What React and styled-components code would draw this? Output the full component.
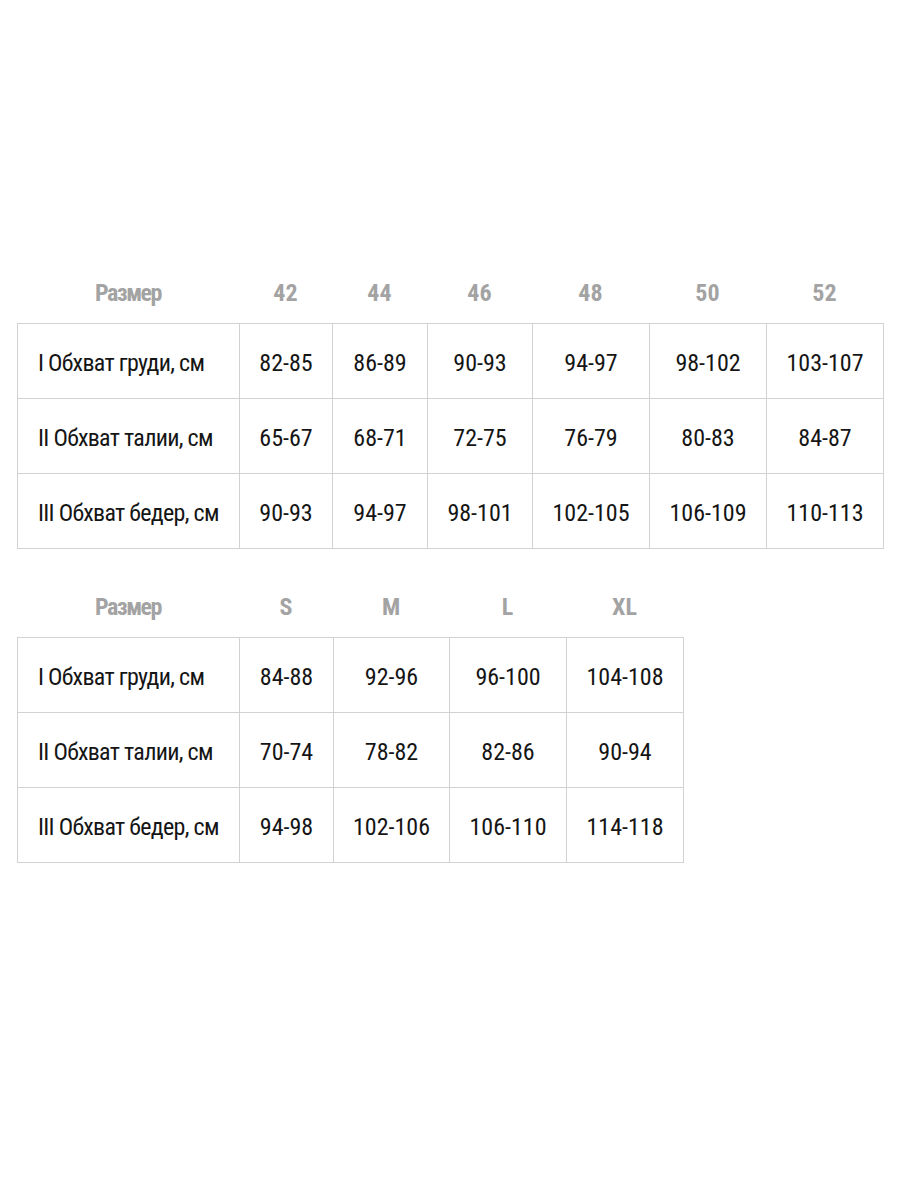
import React from 'react'
import styled, { createGlobalStyle } from 'styled-components'

const GlobalStyle = createGlobalStyle`
body {
    margin: 0;
    background: #fff;
    font-family: "Liberation Sans Narrow", "Roboto Condensed", "Liberation Sans", sans-serif;
}
`

const Page = styled.div`
padding: 270px 0 0 17px;
display: flex;
flex-direction: column;
gap: 35px;
`

const Block = styled.div`
display: flex;
flex-direction: column;
`

const HeadRow = styled.div`
display: grid;
grid-template-columns: ${p => p.cols};
height: 53px;
`

const HeadCell = styled.div`
display: flex;
align-items: center;
justify-content: center;
padding-bottom: 8px;
color: #a3a3a3;
font-weight: bold;
font-size: 24px;
letter-spacing: ${p => p.label ? '-1.5px' : '0'};
`

const Grid = styled.div`
display: grid;
grid-template-columns: ${p => p.cols};
width: max-content;
border-top: 1px solid #d2d2d2;
border-left: 1px solid #d2d2d2;
`

const Cell = styled.div`
height: 74px;
box-sizing: border-box;
height: 75px;
padding-top: 3px;
display: flex;
align-items: center;
justify-content: ${p => p.label ? 'flex-start' : 'center'};
padding-left: ${p => p.label ? '20px' : '0'};
letter-spacing: ${p => p.label ? '-0.7px' : '0'};
border-right: 1px solid #d2d2d2;
border-bottom: 1px solid #d2d2d2;
color: #151515;
font-size: 24px;
`

const labels = ['I Обхват груди, см', 'II Обхват талии, см', 'III Обхват бедер, см']

const tables = [
    {
        cols: '222px 93px 95px 105px 117px 117px 117px',
        head: ['42', '44', '46', '48', '50', '52'],
        rows: [
            ['82-85', '86-89', '90-93', '94-97', '98-102', '103-107'],
            ['65-67', '68-71', '72-75', '76-79', '80-83', '84-87'],
            ['90-93', '94-97', '98-101', '102-105', '106-109', '110-113'],
        ],
    },
    {
        cols: '222px 94px 116px 117px 117px',
        head: ['S', 'M', 'L', 'XL'],
        rows: [
            ['84-88', '92-96', '96-100', '104-108'],
            ['70-74', '78-82', '82-86', '90-94'],
            ['94-98', '102-106', '106-110', '114-118'],
        ],
    },
]

const SizeTable = ({ cols, head, rows }) => (
    <Block>
        <HeadRow cols={cols}>
            <HeadCell label>Размер</HeadCell>
            {head.map(h => <HeadCell key={h}>{h}</HeadCell>)}
        </HeadRow>
        <Grid cols={cols}>
            {rows.map((row, i) => (
                <React.Fragment key={i}>
                    <Cell label>{labels[i]}</Cell>
                    {row.map((v, j) => <Cell key={j}>{v}</Cell>)}
                </React.Fragment>
            ))}
        </Grid>
    </Block>
)

const App = () => (
    <Page>
        <GlobalStyle />
        {tables.map((t, i) => <SizeTable key={i} {...t} />)}
    </Page>
)

export default App
